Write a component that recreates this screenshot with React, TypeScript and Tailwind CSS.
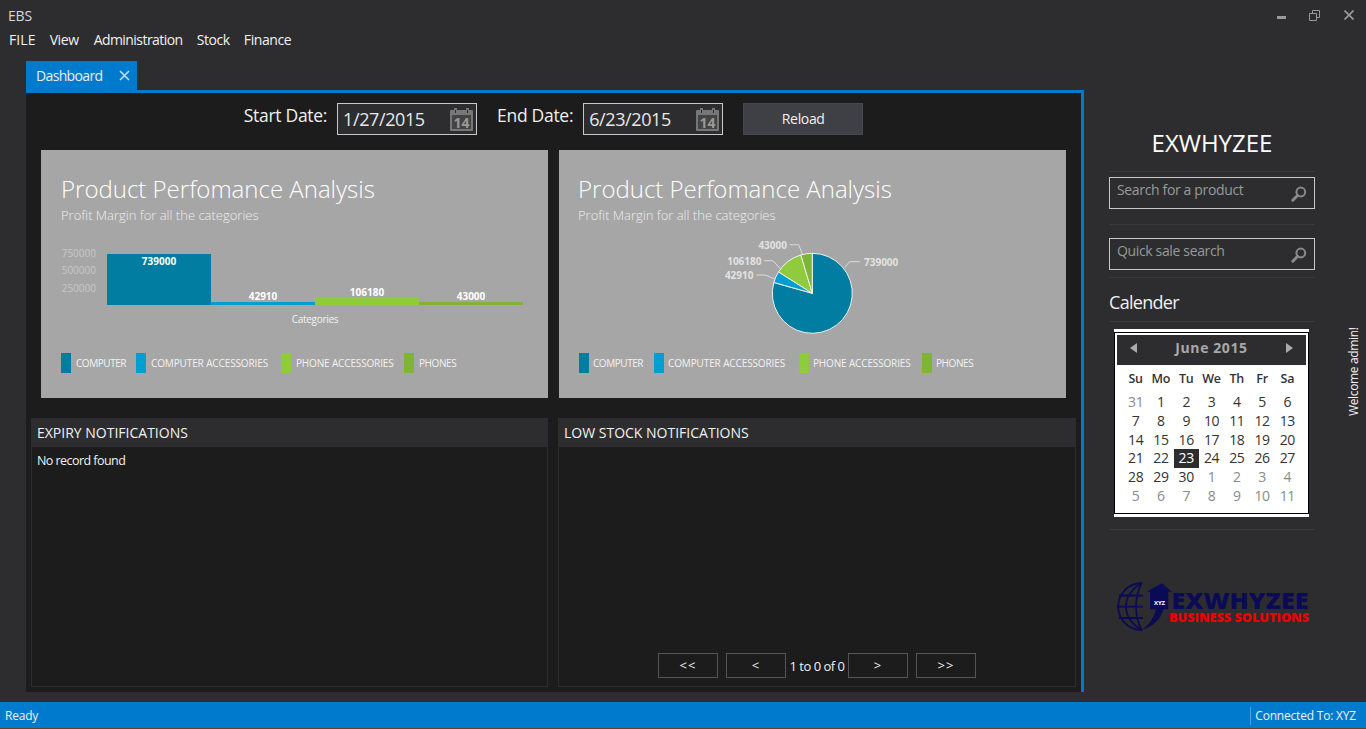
const font = "font-['Open_Sans','Noto_Sans',sans-serif]"

const menuItems = [
	{ label: 'FILE', className: 'tracking-[0.1px]' },
	{ label: 'View', className: 'tracking-[-0.4px]' },
	{ label: 'Administration', className: 'ml-[1px] tracking-[-0.55px]' },
	{ label: 'Stock', className: 'tracking-[-0.4px]' },
	{ label: 'Finance', className: 'tracking-[-0.4px]' }
]

const legend = [
	{ label: 'COMPUTER', color: 'bg-[#007da0]', width: 'w-[51px]', tracking: 'tracking-[-0.45px]' },
	{ label: 'COMPUTER ACCESSORIES', color: 'bg-[#009fd0]', width: 'w-[121px]', tracking: 'tracking-[-0.12px]' },
	{ label: 'PHONE ACCESSORIES', color: 'bg-[#8fcb3c]', width: 'w-[99px]', tracking: 'tracking-[-0.15px]' },
	{ label: 'PHONES', color: 'bg-[#7fb537]', width: 'w-[40px]', tracking: 'tracking-[-0.4px]' }
]

const bars = [
	{ x: 107, y: 254, value: '739000', color: '#007da0', labelY: 264.5 },
	{ x: 211, y: 302, value: '42910', color: '#009fd0', labelY: 300 },
	{ x: 315, y: 297, value: '106180', color: '#8fcb3c', labelY: 295.5 },
	{ x: 419, y: 302, value: '43000', color: '#7fb537', labelY: 300 }
]

const pieData = [
	{ value: 739000, color: '#007da0' },
	{ value: 42910, color: '#009fd0' },
	{ value: 106180, color: '#8fcb3c' },
	{ value: 43000, color: '#7fb537' }
]

const pieLabels = [
	{ text: '739000', x: 864, y: 265.5, anchor: 'start', line: '844.6,267.3 849.7,261.7 860,261.7' },
	{ text: '43000', x: 787, y: 249, anchor: 'end', line: '789.7,244.7 798.7,244.7 802.3,254' },
	{ text: '106180', x: 761.5, y: 265, anchor: 'end', line: '764,260.7 773,260.7 780.7,269.3' },
	{ text: '42910', x: 753.5, y: 279, anchor: 'end', line: '756.3,275 765.3,275 774.7,279' }
]

const calendarHeader = ['Su', 'Mo', 'Tu', 'We', 'Th', 'Fr', 'Sa']

const calendarDays = [
	31, 1, 2, 3, 4, 5, 6, 7, 8, 9, 10, 11, 12, 13, 14, 15, 16, 17, 18, 19, 20, 21,
	22, 23, 24, 25, 26, 27, 28, 29, 30, 1, 2, 3, 4, 5, 6, 7, 8, 9, 10, 11
]

function piePaths() {
	const total = pieData.reduce((sum, item) => sum + item.value, 0)
	const cx = 812.3
	const cy = 293.3
	const r = 40
	let angle = 0
	return pieData.map((item) => {
		const sweep = (item.value / total) * Math.PI * 2
		const x1 = cx + r * Math.sin(angle)
		const y1 = cy - r * Math.cos(angle)
		angle += sweep
		const x2 = cx + r * Math.sin(angle)
		const y2 = cy - r * Math.cos(angle)
		const large = sweep > Math.PI ? 1 : 0
		return {
			d: `M${cx} ${cy}L${x1} ${y1}A${r} ${r} 0 ${large} 1 ${x2} ${y2}Z`,
			color: item.color
		}
	})
}

function CalendarIcon() {
	return (
		<svg width="23" height="23" viewBox="0 0 23 23" className="shrink-0">
			<rect x="0" y="2" width="23" height="21" rx="1" fill="#777" />
			<rect x="4" y="0" width="3" height="5" fill="#777" />
			<rect x="16" y="0" width="3" height="5" fill="#777" />
			<rect x="5" y="2" width="1" height="3" fill="#2d2d30" />
			<rect x="17" y="2" width="1" height="3" fill="#2d2d30" />
			<rect x="2" y="7" width="19" height="14" fill="#444" />
			<text
				x="11.5"
				y="19.5"
				textAnchor="middle"
				fontSize="14"
				fontWeight="700"
				fill="#999"
				fontFamily="'Open Sans', sans-serif"
			>
				14
			</text>
		</svg>
	)
}

function SearchIcon() {
	return (
		<svg width="16" height="16" viewBox="0 0 16 16" className="shrink-0">
			<circle cx="9.8" cy="6" r="4.4" fill="none" stroke="#8a8a8a" strokeWidth="2" />
			<path d="M6.5 9.5 1.8 14.2" stroke="#8a8a8a" strokeWidth="3" strokeLinecap="round" />
		</svg>
	)
}

function DateField({ value }: { value: string }) {
	return (
		<div className="flex h-8 w-[140px] items-center justify-between border border-[#c8c8c8] bg-[#2d2d30] pr-[3px] pl-[5px]">
			<span className="text-[18px] tracking-[-0.4px] text-[#e8e8e8]">{value}</span>
			<CalendarIcon />
		</div>
	)
}

function SearchField({ placeholder }: { placeholder: string }) {
	return (
		<div className="flex h-8 w-[206px] items-center justify-between border border-[#c8c8c8] pr-[7px] pl-[7px]">
			<span className="-mt-[8px] text-[14px] tracking-[-0.35px] text-[#999]">{placeholder}</span>
			<span className="mt-[2px]">
				<SearchIcon />
			</span>
		</div>
	)
}

function ChartLegend() {
	return (
		<div className="mt-[13px] flex items-center gap-[9px]">
			{legend.map((item) => (
				<div key={item.label} className="flex items-center gap-[5px]">
					<span className={`h-5 w-[10px] ${item.color}`} />
					<span className={`${item.width} ${item.tracking} text-[10px] leading-5 whitespace-nowrap text-[#f2f2f2]`}>
						{item.label}
					</span>
				</div>
			))}
		</div>
	)
}

function ChartCard({
	children,
	viewBox,
	padding
}: {
	children: React.ReactNode
	viewBox: string
	padding: string
}) {
	return (
		<div className={`h-[248px] w-[507px] bg-[#a6a6a6] pt-6 ${padding}`}>
			<h2 className="text-[24px] leading-[30px] font-light whitespace-nowrap text-white">
				Product Perfomance Analysis
			</h2>
			<p className="mt-[2px] text-[13px] leading-[18px] font-light text-[#eeeeee]">
				Profit Margin for all the categories
			</p>
			<svg width="507" height="110" viewBox={viewBox} className="mt-[6px] -ml-5 block max-w-none">
				{children}
			</svg>
			<ChartLegend />
		</div>
	)
}

function BarChart() {
	return (
		<ChartCard viewBox="41 230 507 110" padding="pl-5">
			{[
				['750000', 257],
				['500000', 274],
				['250000', 292]
			].map(([label, y]) => (
				<text key={label} x="96" y={y} textAnchor="end" fontSize="10" fill="#c8c8c8">
					{label}
				</text>
			))}
			{bars.map((bar) => (
				<g key={bar.value}>
					<rect x={bar.x} y={bar.y} width="104" height={305 - bar.y} fill={bar.color} />
					<text x={bar.x + 52} y={bar.labelY} textAnchor="middle" fontSize="10" fontWeight="700" fill="#fff">
						{bar.value}
					</text>
				</g>
			))}
			<text x="315" y="322.5" textAnchor="middle" fontSize="10" fill="#f4f4f4" letterSpacing="-0.3">
				Categories
			</text>
		</ChartCard>
	)
}

function PieChart() {
	return (
		<ChartCard viewBox="559 230 507 110" padding="pl-5 -indent-px">
			{piePaths().map((slice) => (
				<path key={slice.color} d={slice.d} fill={slice.color} stroke="#f2f2f2" strokeWidth="1" />
			))}
			{pieLabels.map((label) => (
				<g key={label.text}>
					<polyline points={label.line} fill="none" stroke="#dcdcdc" strokeWidth="1" />
					<text
						x={label.x}
						y={label.y}
						textAnchor={label.anchor as 'start' | 'end'}
						fontSize="10"
						fontWeight="700"
						fill="#e2e2e2"
					>
						{label.text}
					</text>
				</g>
			))}
		</ChartCard>
	)
}

function PagerButton({ label }: { label: string }) {
	return (
		<button className="flex h-[25px] w-[60px] items-center justify-center border border-[#555] pt-[1px] text-[13px] tracking-[1px] text-[#eee]">
			{label}
		</button>
	)
}

function Calendar() {
	return (
		<div className="mt-[7px] ml-[5px] h-[188px] w-[195px] border-y-[3px] border-white">
			<div className="h-full border border-black bg-white p-[2px]">
				<div className="flex h-[30px] items-center justify-between bg-[#2d2d30] pr-[13px] pb-[5px] pl-[13px]">
					<span className="h-0 w-0 border-y-[5px] border-r-[7px] border-y-transparent border-r-[#aaa]" />
					<span className="text-[14px] font-bold tracking-[0.6px] text-[#a8a8a8]">June 2015</span>
					<span className="h-0 w-0 border-y-[5px] border-l-[7px] border-y-transparent border-l-[#aaa]" />
				</div>
				<div className="mt-1 grid grid-cols-7 px-[6px] text-center">
					{calendarHeader.map((day) => (
						<span key={day} className="text-[12.5px] leading-[19px] font-semibold tracking-[-0.2px] text-[#333]">
							{day}
						</span>
					))}
				</div>
				<div className="mt-[5px] grid auto-rows-[18.8px] grid-cols-7 px-[6px] text-center text-[14px] leading-[18.8px] tracking-[-0.4px]">
					{calendarDays.map((day, index) => {
						const outside = index === 0 || index > 30
						const selected = index === 23
						return (
							<span
								key={index}
								className={selected ? 'bg-[#2d2d30] text-white' : outside ? 'text-[#8a8a8a]' : 'text-[#333]'}
							>
								{day}
							</span>
						)
					})}
				</div>
			</div>
		</div>
	)
}

function Logo() {
	return (
		<svg width="196" height="50" viewBox="1115 581 196 50" className="mt-[51px] ml-[6px] block">
			<g fill="none" stroke="#0b0b55" strokeWidth="1.8">
				<path d="M1141.7 583A23.5 23.5 0 0 0 1141.7 630" />
				<path d="M1141.7 583C1130 590 1126 599 1126 606.7 1126 615 1130 623 1141.7 630" />
				<path d="M1141.7 583C1137 592 1136 600 1136 606.7 1136 613 1137 621 1141.7 630" />
				<path d="M1119 595.5h24M1117 606.7h26M1119 618h24" />
			</g>
			<path
				d="M1161.7 583.3 1172 591.7H1168.3V609.3H1163.5C1161 619 1153 627 1141.7 630 1149 625 1154 618 1156 609.3H1150V591.7H1146.7Z"
				fill="#0b0b55"
			/>
			<text x="1159.5" y="605" textAnchor="middle" fontSize="6" fontWeight="700" fill="#fff">
				XYZ
			</text>
			<text
				x="1171.5"
				y="609"
				fontSize="22"
				fontWeight="800"
				fill="#0b0b55"
				textLength="137"
				lengthAdjust="spacingAndGlyphs"
			>
				EXWHYZEE
			</text>
			<text
				x="1169"
				y="621.5"
				fontSize="13"
				fontWeight="800"
				fill="#ee0000"
				textLength="140"
				lengthAdjust="spacingAndGlyphs"
			>
				BUSINESS SOLUTIONS
			</text>
		</svg>
	)
}

export default function App() {
	return (
		<div className={`${font} flex h-[729px] w-[1366px] flex-col overflow-hidden bg-[#2d2d30] text-white`}>
			<div className="flex h-[30px] items-center justify-between pr-3 pl-2">
				<span className="text-[14px] tracking-[-0.2px] text-[#d8d8d8]">EBS</span>
				<div className="flex items-center">
					<span className="mt-[5px] h-[3px] w-[9px] bg-[#999]" />
					<svg width="11" height="11" viewBox="0 0 11 11" className="ml-[23px]">
						<path
							d="M0.5 3.5h7v7h-7zM3.5 3V0.5h7v7H8"
							fill="none"
							stroke="#999"
							strokeWidth="1"
						/>
					</svg>
					<svg width="10" height="10" viewBox="0 0 10 10" className="ml-6">
						<path d="M0.5 0.5 9.5 9.5M9.5 0.5 0.5 9.5" stroke="#999" strokeWidth="1.7" />
					</svg>
				</div>
			</div>
			<nav className="flex h-5 gap-[14px] pl-[9px]">
				{menuItems.map((item) => (
					<span key={item.label} className={`text-[14px] leading-5 text-[#f1f1f1] ${item.className}`}>
						{item.label}
					</span>
				))}
			</nav>

			<div className="mt-[11px] flex flex-1">
				<div className="ml-[26px] flex w-[1058px] flex-col">
					<div className="flex h-[29px] w-[111px] items-center justify-between bg-[#007acc] pr-[7px] pl-[10px]">
						<span className="text-[14px] tracking-[-0.65px] text-[#eeeeee]">Dashboard</span>
						<svg width="11" height="11" viewBox="0 0 11 11">
							<path d="M1 1 10 10M10 1 1 10" stroke="#bfe0f5" strokeWidth="1.6" />
						</svg>
					</div>
					<main className="flex h-[602px] flex-col border-t-[3px] border-r-[3px] border-[#007acc] bg-[#1c1c1c]">
						<div className="mt-[10px] flex h-8 items-center justify-center">
							<span className="-mt-[8px] text-[17.5px] tracking-[-0.3px] text-[#f0f0f0]">Start Date:</span>
							<div className="ml-[10px]">
								<DateField value="1/27/2015" />
							</div>
							<span className="-mt-[8px] ml-5 text-[17.5px] tracking-[-0.3px] text-[#f0f0f0]">End Date:</span>
							<div className="ml-[10px]">
								<DateField value="6/23/2015" />
							</div>
							<button className="ml-5 h-8 w-[120px] border border-[#46464c] bg-[#3f3f46] pb-[2px] text-[14px] tracking-[-0.35px] text-[#f0f0f0]">
								Reload
							</button>
						</div>

						<div className="mt-[15px] ml-[15px] flex gap-[11px]">
							<BarChart />
							<PieChart />
						</div>

						<div className="mt-5 ml-[5px] flex gap-[10px]">
							<section className="flex h-[269px] w-[517px] flex-col border border-[#2d2d30]">
								<header className="flex h-[28px] items-center bg-[#2d2d30] pb-[2px] pl-[5px] text-[14px] text-[#f1f1f1]">
									EXPIRY NOTIFICATIONS
								</header>
								<p className="mt-[5px] pl-[5px] text-[12.5px] leading-[18px] tracking-[-0.55px] text-[#f1f1f1]">
									No record found
								</p>
							</section>
							<section className="flex h-[269px] w-[518px] flex-col border border-[#2d2d30]">
								<header className="flex h-[28px] items-center bg-[#2d2d30] pb-[2px] pl-[5px] text-[14px] text-[#f1f1f1]">
									LOW STOCK NOTIFICATIONS
								</header>
								<div className="mt-auto mb-2 flex items-center justify-center">
									<PagerButton label="<<" />
									<div className="ml-2">
										<PagerButton label="<" />
									</div>
									<span className="mt-[2px] w-[62px] text-center text-[13px] tracking-[-0.5px] whitespace-nowrap text-[#f1f1f1]">
										1 to 0 of 0
									</span>
									<PagerButton label=">" />
									<div className="ml-2">
										<PagerButton label=">>" />
									</div>
								</div>
							</section>
						</div>
					</main>
				</div>

				<aside className="ml-[25px] w-[206px] pt-[68px]">
					<h1 className="text-center text-[24px] leading-[28px] text-white">EXWHYZEE</h1>
					<div className="mt-[14px] mb-[5px] h-px bg-[#3a3a3d]" />
					<SearchField placeholder="Search for a product" />
					<div className="mt-[15px] mb-[13px] h-px bg-[#3a3a3d]" />
					<SearchField placeholder="Quick sale search" />
					<div className="mt-[7px] h-px bg-[#3a3a3d]" />
					<h3 className="mt-[13px] text-[18px] leading-[22px] tracking-[-0.7px] text-[#f1f1f1]">Calender</h3>
					<div className="mt-[8px] h-px bg-[#3a3a3d]" />
					<Calendar />
					<div className="mt-3 h-px bg-[#3a3a3d]" />
					<Logo />
				</aside>

				<div className="mt-[265px] ml-[32px] h-[90px] rotate-180 text-[12px] leading-[14px] tracking-[-0.35px] text-[#f1f1f1] [writing-mode:vertical-rl]">
					Welcome admin!
				</div>
			</div>

			<footer className="mt-[10px] flex h-[26px] items-center justify-between bg-[#007acc] pt-[2px] pr-[10px] pl-[5px] text-[12px] tracking-[-0.2px] text-[#f1f1f1]">
				<span>Ready</span>
				<span className="border-l border-[#4aa3dc] pl-[4px]">Connected To: XYZ</span>
			</footer>
			<div className="h-px bg-[#6b3f1d]" />
		</div>
	)
}
